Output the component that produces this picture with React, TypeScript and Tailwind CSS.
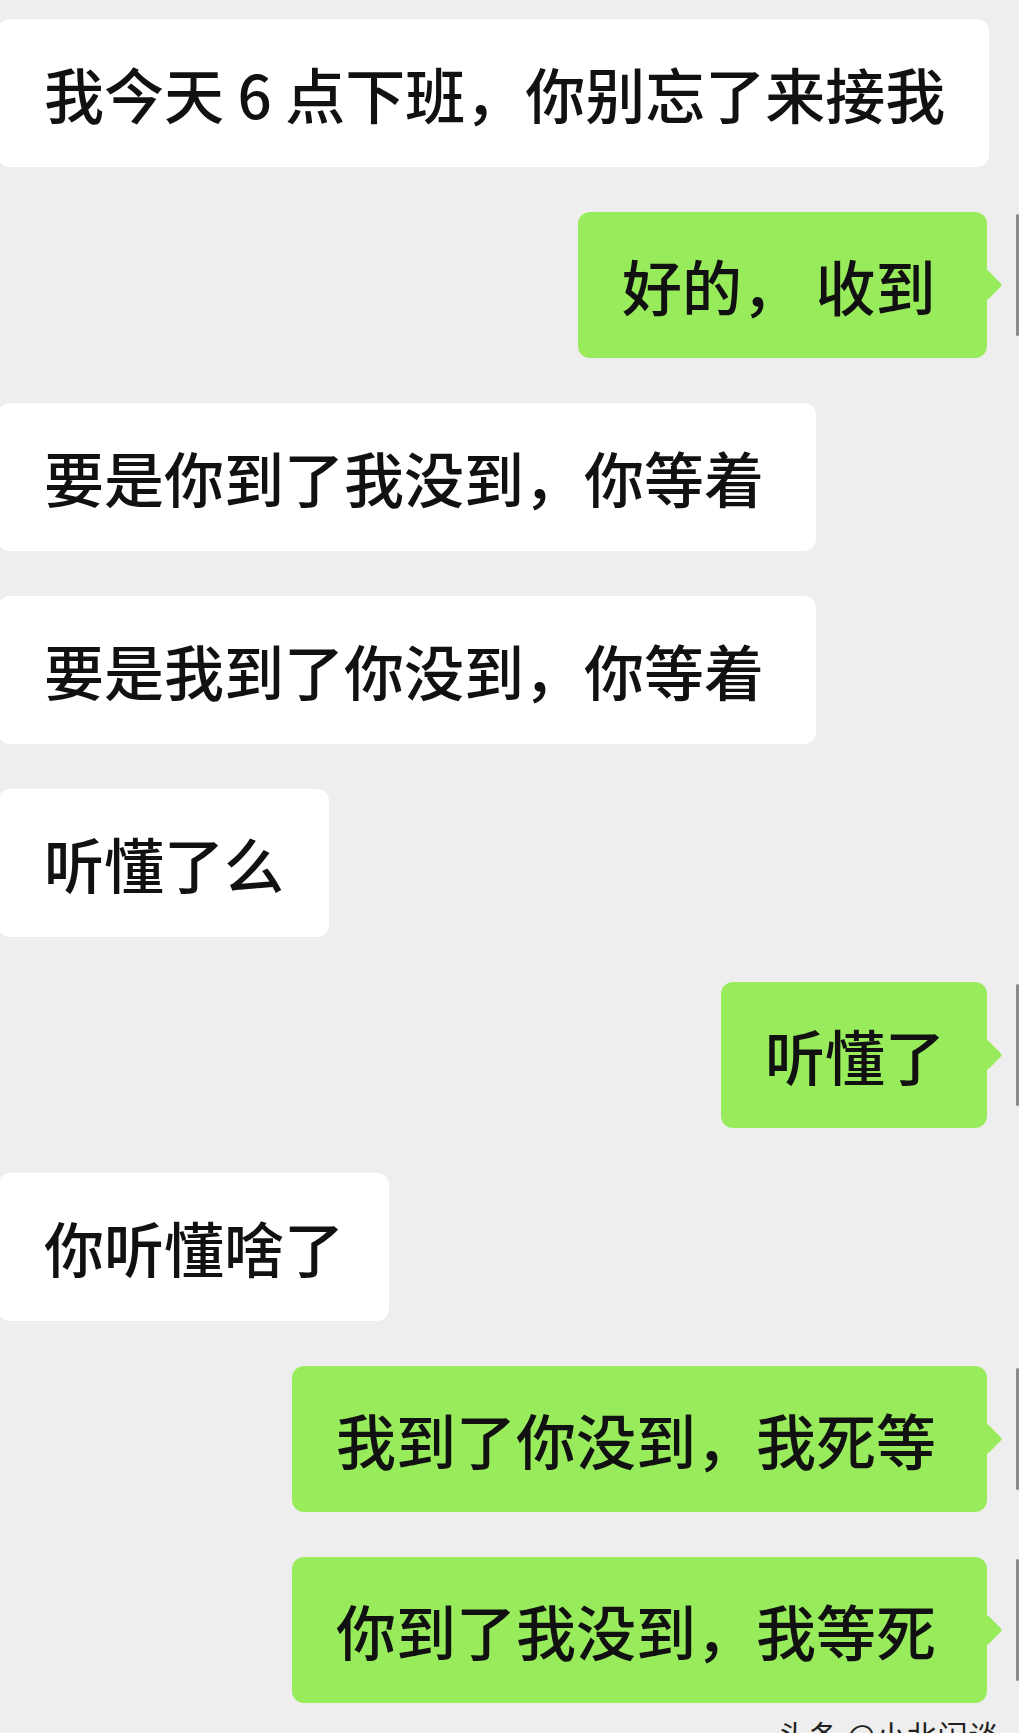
const messages = [
  { side: "left", text: "我今天 6 点下班，你别忘了来接我", w: "w-[991px]" },
  { side: "right", text: "好的， 收到", w: "w-[409px]" },
  { side: "left", text: "要是你到了我没到，你等着", w: "w-[818px]" },
  { side: "left", text: "要是我到了你没到，你等着", w: "w-[818px]" },
  { side: "left", text: "听懂了么", w: "w-[331px]" },
  { side: "right", text: "听懂了", w: "w-[266px]" },
  { side: "left", text: "你听懂啥了", w: "w-[391px]" },
  { side: "right", text: "我到了你没到，我死等", w: "w-[695px]" },
  { side: "right", text: "你到了我没到，我等死", w: "w-[695px]" },
];

function Bubble({ side, text, w }: { side: string; text: string; w: string }) {
  if (side === "left") {
    return (
      <div className="flex">
        <div
          className={`${w} h-[148px] -ml-[2px] flex items-center pl-[46px] bg-white rounded-[12px] whitespace-nowrap`}
        >
          {text}
        </div>
      </div>
    );
  }
  return (
    <div className="flex items-start justify-end">
      <div
        className={`${w} relative h-[146px] flex items-center pl-[44px] bg-[#98ec5c] rounded-[12px] whitespace-nowrap`}
      >
        {text}
        {/* tail */}
        <span className="absolute right-[-11px] top-1/2 -translate-y-1/2 w-[22px] h-[22px] rotate-45 rounded-[3px] bg-[#98ec5c]" />
      </div>
      <div className="w-[32px] flex justify-end pt-[2px]">
        <span className="block w-[3px] h-[122px] bg-[#8a8c8a] rounded-sm" />
      </div>
    </div>
  );
}

export default function App() {
  return (
    <div className="h-[1733px] overflow-hidden bg-[#edeeed] font-['Noto_Sans_CJK_SC',sans-serif] font-medium text-[60px] leading-none text-[#111]">
      <div className="flex flex-col gap-[45px] pt-[19px]">
        {messages.map((m, i) => (
          <Bubble key={i} {...m} />
        ))}
      </div>
      <div className="flex justify-end pr-[20px] mt-[16px]">
        <span className="text-[30px] font-normal text-[#222] tracking-wide">头条 @小北闲谈</span>
      </div>
    </div>
  );
}
